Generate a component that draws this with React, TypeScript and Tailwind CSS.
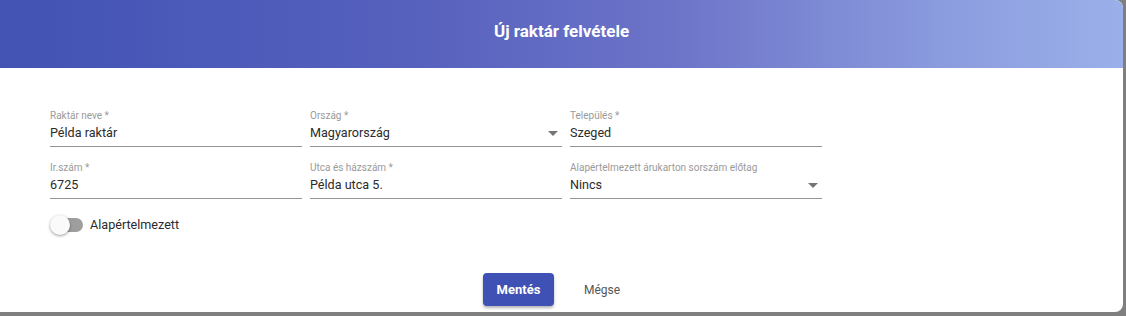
import React from 'react';

interface FieldProps {
  label: string;
  value: string;
  select?: boolean;
}

const Field = ({ label, value, select }: FieldProps) => (
  <div className="flex flex-col">
    <span className="text-[10px] leading-3 text-[#9a9a9a]">{label}</span>
    <div className="mt-px flex h-5 items-center justify-between border-b border-[#949494] pb-[3px] box-content">
      <span className="text-[12.6px] text-[#2b2b2b]">{value}</span>
      {select && (
        <svg width="10" height="5" viewBox="0 0 10 5" className="mr-[4px]">
          <path d="M0 0L5 5L10 0Z" fill="#757575" />
        </svg>
      )}
    </div>
  </div>
);

export default function App() {
  return (
    <div className="h-[316px] w-full overflow-hidden bg-[#7f7f7f] font-['Roboto',sans-serif]">
      <div className="flex h-[312px] w-[1123px] flex-col overflow-hidden rounded-r-lg bg-white">
        {/* Header */}
        <div className="flex h-[68px] items-center justify-center bg-[linear-gradient(to_right,#4253b4_0%,#5560bd_35%,#6c74c8_60%,#8c9ddf_85%,#9bb0ea_100%)] pb-1">
          <h2 className="text-[17px] font-bold text-white">Új raktár felvétele</h2>
        </div>

        {/* Form */}
        <div className="pl-[50px] pt-[42px]">
          <div className="grid grid-cols-[252px_252px_252px] gap-x-2 gap-y-[15px]">
            <Field label="Raktár neve *" value="Példa raktár" />
            <Field label="Ország *" value="Magyarország" select />
            <Field label="Település *" value="Szeged" />
            <Field label="Ir.szám *" value="6725" />
            <Field label="Utca és házszám *" value="Példa utca 5." />
            <Field label="Alapértelmezett árukarton sorszám előtag" value="Nincs" select />
          </div>

          {/* Toggle */}
          <div className="mt-4 flex items-center gap-[7px]">
            <div className="relative h-5 w-[33px]">
              <div className="absolute left-[3px] top-[3px] h-[14px] w-[30px] rounded-full bg-[#9e9e9e]" />
              <div className="absolute left-0 top-0 h-5 w-5 rounded-full bg-[#fafafa] shadow-[0_1px_3px_rgba(0,0,0,0.4)]" />
            </div>
            <span className="text-[12.6px] text-[#2b2b2b]">Alapértelmezett</span>
          </div>
        </div>

        {/* Actions */}
        <div className="mt-[38px] flex justify-center gap-4 pr-[6px]">
          <button className="h-[33px] w-[71px] rounded bg-[#3f51b5] text-[13px] font-bold text-white shadow-[0_2px_3px_rgba(0,0,0,0.3)]">
            Mentés
          </button>
          <button className="h-[33px] w-[64px] rounded text-[12px] text-[#555555]">Mégse</button>
        </div>
      </div>
    </div>
  );
}
